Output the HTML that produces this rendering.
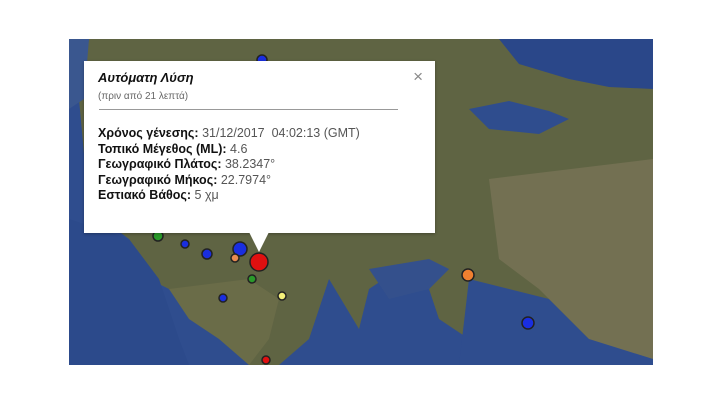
<!DOCTYPE html>
<html><head><meta charset="utf-8"><style>
body{margin:0;width:720px;height:405px;background:#fff;overflow:hidden;position:relative;font-family:"Liberation Sans",Arial,sans-serif}
#map{position:absolute;left:69px;top:39px;width:584px;height:326px}
#pop{position:absolute;left:84px;top:61px;width:351px;height:172px;background:#fff;box-shadow:0 1px 3px rgba(0,0,0,.3)}
#tip{position:absolute;left:249px;top:232px;width:0;height:0;border-left:10px solid transparent;border-right:10px solid transparent;border-top:20px solid #fff}
.t{position:absolute;left:14px;color:#111}
b{font-weight:bold;color:#111}
.v{color:#555}
</style></head><body>
<svg id="map" viewBox="0 0 584 326" preserveAspectRatio="none">
<rect width="584" height="326" fill="#2f4d8e"/>
<path d="M20 0 L584 0 L584 326 L420 326 L400 300 L370 280 L360 250 L380 230 L330 230 L300 250 L290 290 L260 240 L240 300 L210 326 L180 326 L170 290 L120 260 L80 240 L60 200 L20 170 L10 60 Z" fill="#5f6443"/>
<path d="M100 250 L180 240 L210 260 L200 300 L180 326 L150 300 L120 280 Z" fill="#6a6c48"/>
<path d="M430 0 L584 0 L584 50 L540 48 L500 40 L450 25 Z" fill="#2a4789"/>
<path d="M400 70 L440 62 L480 72 L500 80 L470 95 L420 90 Z" fill="#2f4d8e"/>
<path d="M300 230 L360 220 L380 230 L360 250 L320 260 Z" fill="#34508c"/>
<path d="M400 240 L480 260 L520 300 L584 310 L584 326 L390 326 Z" fill="#2f4d8e"/>
<path d="M0 180 L60 200 L90 240 L110 300 L120 326 L0 326 Z" fill="#2c4a8b"/>
<path d="M0 0 L20 0 L15 60 L0 70 Z" fill="#3a578f"/>
<path d="M420 140 L584 120 L584 320 L520 300 L470 250 L430 220 Z" fill="#737052"/>
<g stroke="#222" stroke-width="1.5">
<circle cx="190" cy="223" r="9" fill="#e01010"/>
<circle cx="171" cy="210" r="7" fill="#1a2ee0"/>
<circle cx="166" cy="219" r="4" fill="#e88a50"/>
<circle cx="138" cy="215" r="5" fill="#1a2ee0"/>
<circle cx="116" cy="205" r="4" fill="#1a2ee0"/>
<circle cx="89" cy="197" r="5" fill="#2a9a2a"/>
<circle cx="183" cy="240" r="4" fill="#2a9a2a"/>
<circle cx="213" cy="257" r="4" fill="#f4f07a"/>
<circle cx="154" cy="259" r="4" fill="#1a2ee0"/>
<circle cx="399" cy="236" r="6" fill="#f08030"/>
<circle cx="459" cy="284" r="6" fill="#1a2ee0"/>
<circle cx="197" cy="321" r="4" fill="#e01010"/>
<circle cx="193" cy="21" r="5" fill="#1a2ee0"/>
</g>
</svg>
<div id="pop">
<div class="t" style="top:9px;font-size:13px;font-style:italic;font-weight:bold">Αυτόματη Λύση</div>
<div class="t" style="top:30px;font-size:10px;color:#666">(πριν από 21 λεπτά)</div>
<div style="position:absolute;left:15px;top:48px;width:299px;height:1px;background:#999"></div>
<div style="position:absolute;right:12px;top:6px;font-size:17px;color:#888">×</div>
<div class="t" style="top:65px;font-size:12.5px;line-height:15.5px"><b>Χρόνος γένεσης:</b> <span class="v">31/12/2017&nbsp; 04:02:13 (GMT)</span><br><b>Τοπικό Μέγεθος (ML):</b> <span class="v">4.6</span><br><b>Γεωγραφικό Πλάτος:</b> <span class="v">38.2347°</span><br><b>Γεωγραφικό Μήκος:</b> <span class="v">22.7974°</span><br><b>Εστιακό Βάθος:</b> <span class="v">5 χμ</span></div>
</div>
<div id="tip"></div>
</body></html>
